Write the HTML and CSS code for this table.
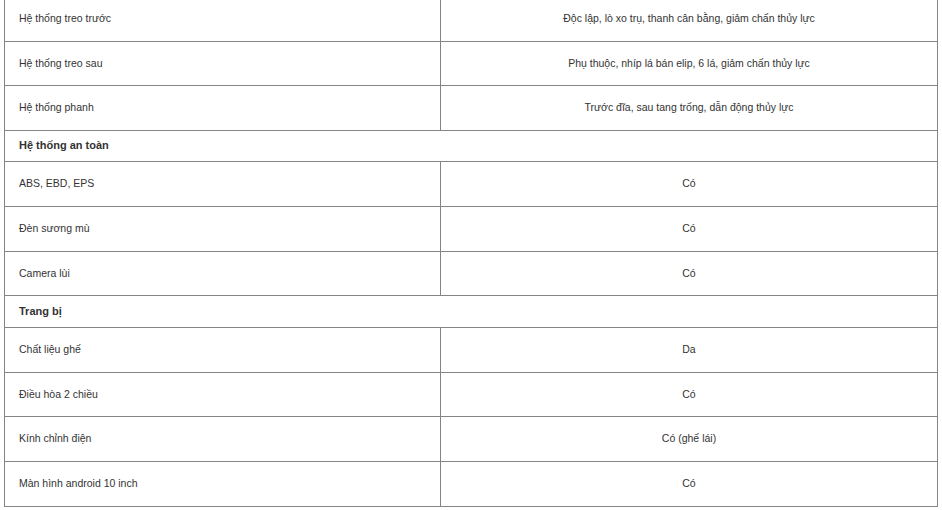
FILE: index.html
```html
<!DOCTYPE html>
<html lang="vi">
<head>
<meta charset="utf-8">
<title>Thông số</title>
<link rel="stylesheet" href="styles.css">
</head>
<body>
<div class="wrap">
<table class="spec">
<colgroup><col class="c1"><col class="c2"></colgroup>
<tbody>
<tr><td>Hệ thống treo trước</td><td class="val">Độc lập, lò xo trụ, thanh cân bằng, giảm chấn thủy lực</td></tr>
<tr><td>Hệ thống treo sau</td><td class="val">Phụ thuộc, nhíp lá bán elip, 6 lá, giảm chấn thủy lực</td></tr>
<tr><td>Hệ thống phanh</td><td class="val">Trước đĩa, sau tang trống, dẫn động thủy lực</td></tr>
<tr class="group"><td colspan="2">Hệ thống an toàn</td></tr>
<tr><td>ABS, EBD, EPS</td><td class="val">Có</td></tr>
<tr><td>Đèn sương mù</td><td class="val">Có</td></tr>
<tr><td>Camera lùi</td><td class="val">Có</td></tr>
<tr class="group"><td colspan="2">Trang bị</td></tr>
<tr><td>Chất liệu ghế</td><td class="val">Da</td></tr>
<tr><td>Điều hòa 2 chiều</td><td class="val">Có</td></tr>
<tr><td>Kính chỉnh điện</td><td class="val">Có (ghế lái)</td></tr>
<tr><td>Màn hình android 10 inch</td><td class="val">Có</td></tr>
</tbody>
</table>
</div>
</body>
</html>
```

FILE: styles.css
```css
html, body {
  margin: 0;
  padding: 0;
  background: #fff;
}
.wrap {
  padding-left: 4px;
  margin-top: -4px;
}
.spec {
  width: 934px;
  border-collapse: collapse;
  table-layout: fixed;
  font-family: "Liberation Sans", Arial, sans-serif;
  font-size: 10.5px;
  line-height: 13.67px;
  color: #333;
}
.c1 { width: 436px; }
.spec td {
  border: 1px solid #858585;
  padding: 15px 14px;
  vertical-align: middle;
}
.spec td.val {
  text-align: center;
}
.spec tr.group td {
  padding: 8.4px 14px;
  font-size: 11px;
  font-weight: bold;
  color: #333;
}
```
